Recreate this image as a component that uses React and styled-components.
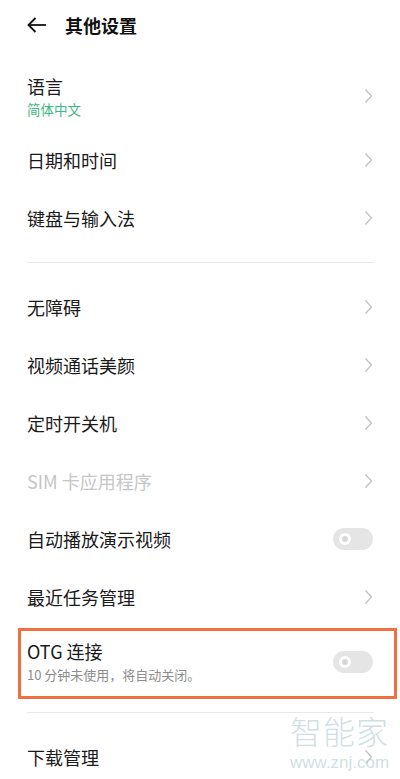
import React from 'react'
import styled, { createGlobalStyle } from 'styled-components'

const GlobalStyle = createGlobalStyle`
  html, body {
    margin: 0;
    padding: 0;
    background: #fff;
  }
  body {
    font-family: "Noto Sans CJK SC", "Noto Sans", sans-serif;
    color: #1c1c1c;
  }
`

const groups = [
  [
    { title: '语言', sub: '简体中文', kind: 'link' },
    { title: '日期和时间', kind: 'link' },
    { title: '键盘与输入法', kind: 'link' },
  ],
  [
    { title: '无障碍', kind: 'link' },
    { title: '视频通话美颜', kind: 'link' },
    { title: '定时开关机', kind: 'link' },
    { title: 'SIM 卡应用程序', kind: 'link', disabled: true },
    { title: '自动播放演示视频', kind: 'switch' },
    { title: '最近任务管理', kind: 'link' },
  ],
]

function Chevron() {
  return (
    <svg width="9" height="16" viewBox="0 0 9 16">
      <polyline points="1.5,1.5 7.5,8 1.5,14.5" fill="none" stroke="#c4c4c4" strokeWidth="1.4" strokeLinejoin="miter" />
    </svg>
  )
}

function BackArrow() {
  return (
    <svg width="20" height="16" viewBox="0 0 20 16">
      <line x1="1.5" y1="8" x2="19" y2="8" stroke="#111" strokeWidth="1.8" />
      <polyline points="8.5,1 1.5,8 8.5,15" fill="none" stroke="#111" strokeWidth="1.8" />
    </svg>
  )
}

function Row({ item }) {
  return (
    <RowBox $tall={!!item.sub}>
      <TextCol>
        <Title $disabled={item.disabled}>{item.title}</Title>
        {item.sub && <Sub $green>{item.sub}</Sub>}
      </TextCol>
      {item.kind === 'switch' ? <Switch /> : <Chevron />}
    </RowBox>
  )
}

export default function App() {
  return (
    <Page>
      <GlobalStyle />
      <Header>
        <BackArrow />
        <HeaderTitle>其他设置</HeaderTitle>
      </Header>
      <List>
        {groups[0].map(item => <Row key={item.title} item={item} />)}
        <Divider />
        {groups[1].map(item => <Row key={item.title} item={item} />)}
        <Highlight>
          <TextCol $gap={3}>
            <Title>OTG 连接</Title>
            <Sub>10 分钟未使用，将自动关闭。</Sub>
          </TextCol>
          <Switch />
        </Highlight>
        <Divider $after />
        <Row item={{ title: '下载管理', kind: 'link' }} />
      </List>
      <Watermark>
        <span className="big">智能家</span>
        <span className="url">www.znj.com</span>
      </Watermark>
    </Page>
  )
}

const Page = styled.div`
  position: relative;
  width: 400px;
  height: 779px;
  overflow: hidden;
  background: #fff;
`

const Header = styled.div`
  display: flex;
  align-items: center;
  gap: 18px;
  height: 50px;
  padding: 0 27px;
`

const HeaderTitle = styled.div`
  font-size: 18px;
  font-weight: 700;
  color: #111;
  line-height: 24px;
`

const List = styled.div`
  display: flex;
  flex-direction: column;
  padding: 10px 26px 0 27px;
`

const RowBox = styled.div`
  display: flex;
  align-items: center;
  justify-content: space-between;
  height: ${p => (p.$tall ? '71px' : '58px')};
  padding-right: 1px;
`

const TextCol = styled.div`
  display: flex;
  flex-direction: column;
  gap: ${p => p.$gap ?? 2}px;
`

const Title = styled.div`
  font-size: 18px;
  line-height: 24px;
  color: ${p => (p.$disabled ? '#c6c6c6' : '#1a1a1a')};
`

const Sub = styled.div`
  font-size: ${p => (p.$green ? '13.5px' : '13px')};
  line-height: 18px;
  color: ${p => (p.$green ? '#3db882' : '#8c8c8c')};
`

const Divider = styled.div`
  height: 1px;
  background: #e9e9e9;
  margin: ${p => (p.$after ? '13px 0 15px' : '15px 0 15px')};
`

const Switch = styled.div`
  position: relative;
  width: 40px;
  height: 22px;
  border-radius: 11px;
  background: #e5e5e5;
  flex-shrink: 0;

  &::after {
    content: '';
    position: absolute;
    left: 6px;
    top: 5px;
    width: 6px;
    height: 6px;
    border-radius: 50%;
    border: 3px solid #fff;
    background: #d6d6d6;
  }
`

const Highlight = styled.div`
  display: flex;
  align-items: center;
  justify-content: space-between;
  margin: 2px -23px 0 -9px;
  padding: 3px 21px 7px 6px;
  height: 71px;
  box-sizing: border-box;
  border: 3px solid #f07040;
`

const Watermark = styled.div`
  position: absolute;
  left: 290px;
  top: 713px;
  display: flex;
  flex-direction: column;
  align-items: center;
  gap: 7px;
  pointer-events: none;
  color: rgba(175, 202, 208, 0.6);
  font-family: "Noto Sans CJK SC", sans-serif;

  .big {
    font-size: 32px;
    font-weight: 300;
    line-height: 34px;
    letter-spacing: 1px;
  }
  .url {
    font-family: "Liberation Sans", sans-serif;
    font-size: 17px;
    line-height: 18px;
  }
`
